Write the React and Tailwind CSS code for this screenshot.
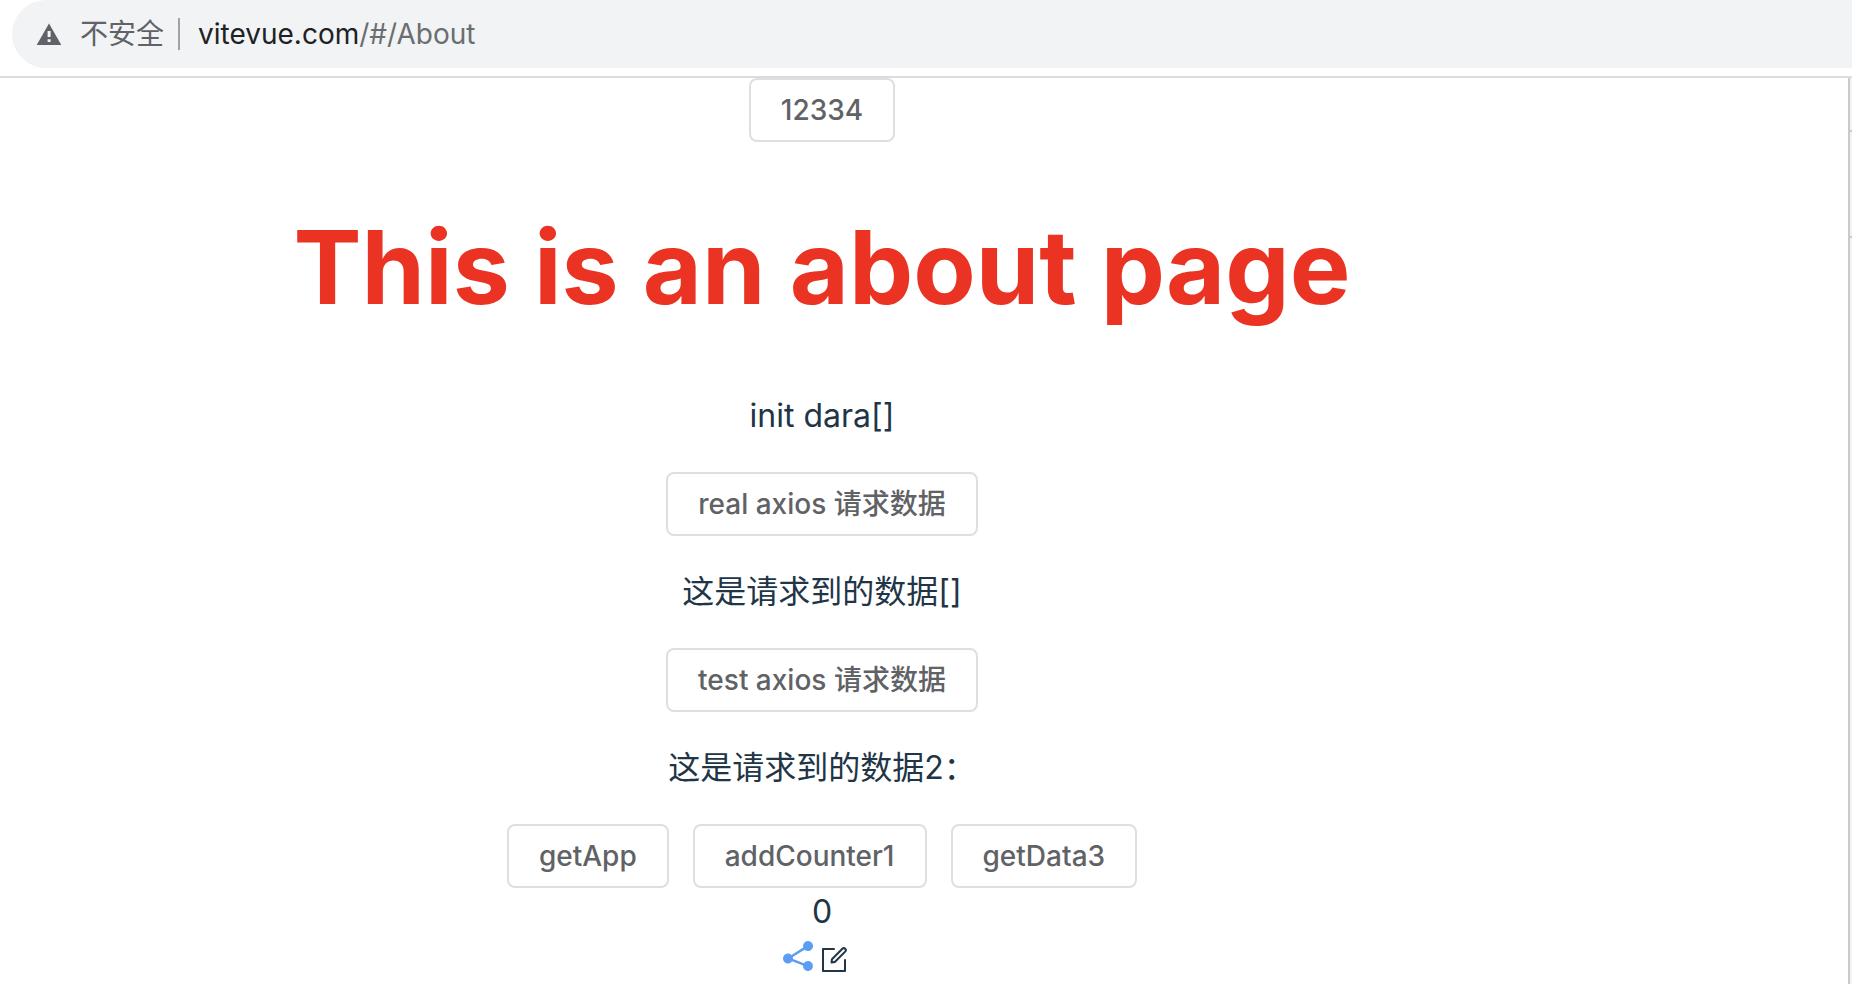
import React, { useState } from "react";

function ElButton({ children, onClick }) {
  return (
    <button
      type="button"
      onClick={onClick}
      className="h-16 rounded-lg border-2 border-[#dddfe3] bg-white px-[30px] text-[28px] leading-7 font-medium text-[#606266]"
    >
      {children}
    </button>
  );
}

function WarningIcon() {
  return (
    <svg viewBox="0 0 26 22" className="h-[22px] w-[26px]" aria-hidden="true">
      <path fill="#5f6368" d="M13 0.5 25.3 22H0.7z" />
      <path fill="#f1f3f4" d="M11.6 8h3v6h-3zM11.6 16.2h3v2.8h-3z" />
    </svg>
  );
}

function ShareIcon() {
  return (
    <svg viewBox="0 0 1024 1024" className="h-10 w-10" aria-hidden="true">
      <path
        fill="#5b9cf5"
        d="m679.872 348.8-301.76 188.608a127.808 127.808 0 0 1 5.12 52.16l279.936 104.96a128 128 0 1 1-22.464 59.904l-279.872-104.96a128 128 0 1 1-16.64-166.272l301.696-188.608a128 128 0 1 1 33.92 54.272z"
      />
    </svg>
  );
}

function EditIcon() {
  return (
    <svg viewBox="0 0 1024 1024" className="h-8 w-8" fill="currentColor" aria-hidden="true">
      <path d="M832 512a32 32 0 1 1 64 0v352a32 32 0 0 1-32 32H160a32 32 0 0 1-32-32V160a32 32 0 0 1 32-32h352a32 32 0 0 1 0 64H192v640h640V512z" />
      <path d="m469.952 554.24 52.8-7.552L847.104 222.4a32 32 0 1 0-45.248-45.248L477.44 501.44l-7.552 52.8zm422.4-422.4a96 96 0 0 1 0 135.808l-331.84 331.84a32 32 0 0 1-18.112 9.088L436.8 623.68a32 32 0 0 1-36.224-36.224l15.104-105.6a32 32 0 0 1 9.024-18.112l331.904-331.84a96 96 0 0 1 135.744 0z" />
    </svg>
  );
}

function AddressBar() {
  return (
    <header className="border-b-2 border-[#dadcdf] bg-white pb-2 pl-3">
      <div className="flex h-[68px] items-center rounded-l-full bg-[#f1f3f4] pl-6 text-[28px]">
        <WarningIcon />
        <span className="ml-[18px] text-[#5f6368]">不安全</span>
        <span className="mr-[18px] ml-[14px] h-8 w-0.5 bg-[#9fa2a6]" />
        <a href="#/About" className="text-[#6b6e71]">
          <span className="text-[#202124]">vitevue.com</span>/#/About
        </a>
      </div>
    </header>
  );
}

export default function App() {
  const [count, setCount] = useState(0);
  return (
    <div className="flex min-h-screen flex-col bg-white font-['Inter','Noto_Sans_CJK_SC',sans-serif]">
      <AddressBar />
      <div className="flex grow">
        <main className="flex grow flex-col items-center pr-[204px] text-[32px] leading-[48px] text-[#213547]">
          <ElButton>12334</ElButton>
          <h1 className="py-[69px] text-[102px] leading-[112px] font-bold text-[#ea3323]">
            This is an about page
          </h1>
          <p>init dara[]</p>
          <div className="py-8">
            <ElButton>real axios 请求数据</ElButton>
          </div>
          <p>这是请求到的数据[]</p>
          <div className="py-8">
            <ElButton>test axios 请求数据</ElButton>
          </div>
          <p>这是请求到的数据2：</p>
          <div className="flex gap-6 pt-8">
            <ElButton>getApp</ElButton>
            <ElButton onClick={() => setCount(count + 1)}>addCounter1</ElButton>
            <ElButton>getData3</ElButton>
          </div>
          <div>{count}</div>
          <div className="flex items-end pr-4">
            <ShareIcon />
            <EditIcon />
          </div>
        </main>
        <aside className="w-1 border-l-2 border-[#c9cacc] bg-[#f1f3f4]">
          <div className="h-[52px]" />
          <div className="h-[108px] border-y-2 border-[#c9cacc]" />
        </aside>
      </div>
    </div>
  );
}
